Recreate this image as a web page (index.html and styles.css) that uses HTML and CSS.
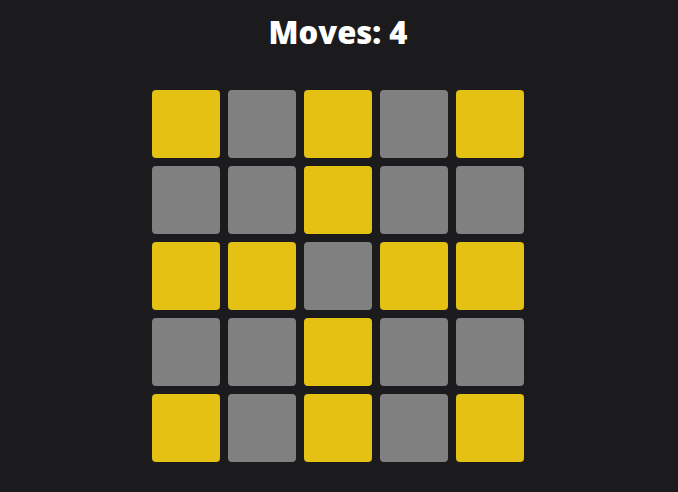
FILE: index.html
```html
<!DOCTYPE html>
<html>
<head>
<meta charset="utf-8">
<link rel="stylesheet" href="styles.css">
</head>
<body>
<div class="app">
  <h1 class="title">Moves: 4</h1>
  <div class="board">
    <div class="cell on"></div><div class="cell"></div><div class="cell on"></div><div class="cell"></div><div class="cell on"></div>
    <div class="cell"></div><div class="cell"></div><div class="cell on"></div><div class="cell"></div><div class="cell"></div>
    <div class="cell on"></div><div class="cell on"></div><div class="cell"></div><div class="cell on"></div><div class="cell on"></div>
    <div class="cell"></div><div class="cell"></div><div class="cell on"></div><div class="cell"></div><div class="cell"></div>
    <div class="cell on"></div><div class="cell"></div><div class="cell on"></div><div class="cell"></div><div class="cell on"></div>
  </div>
</div>
</body>
</html>
```
FILE: styles.css
```css
html, body {
  margin: 0;
  padding: 0;
  background: #1b1b1e;
  height: 100%;
}
.app {
  display: flex;
  flex-direction: column;
  align-items: center;
  padding-right: 2px;
  font-family: "Open Sans", "Lato", sans-serif;
  color: #ffffff;
}
.title {
  margin: 12px 0 0 0;
  font-size: 31px;
  font-weight: 800;
  line-height: 40px;
}
.board {
  margin-top: 38px;
  display: grid;
  grid-template-columns: repeat(5, 68px);
  grid-auto-rows: 68px;
  gap: 8px;
}
.cell {
  background: #808080;
  border-radius: 4px;
}
.cell.on {
  background: #e5c113;
}
```
